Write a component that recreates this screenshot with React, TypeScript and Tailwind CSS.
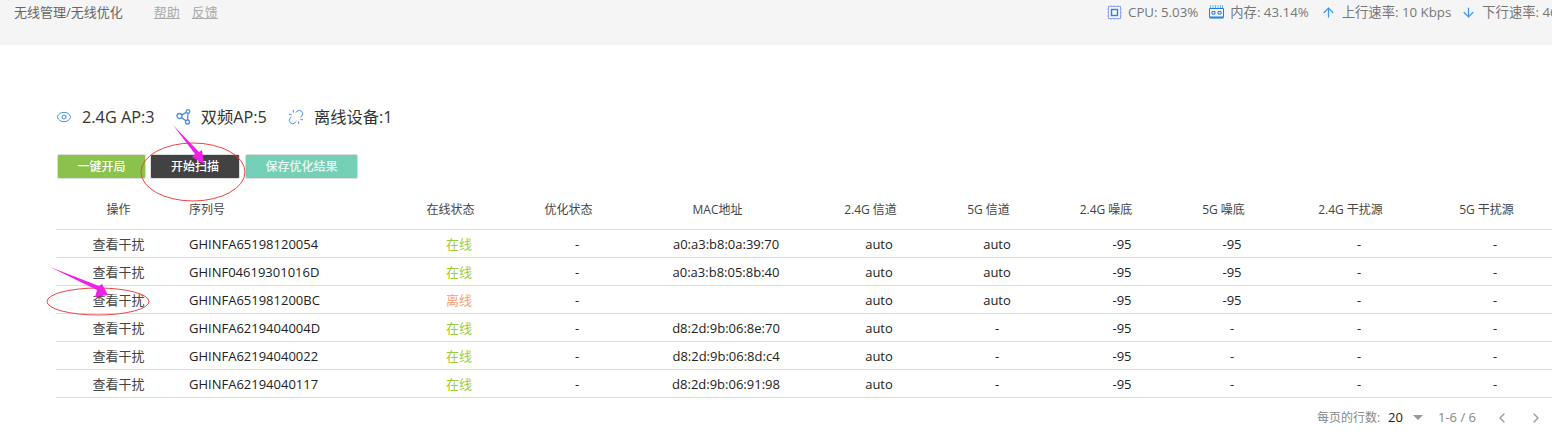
import React from 'react';
import { ArrowDown, ArrowUp, ChevronLeft, ChevronRight, Eye, Unlink } from 'lucide-react';

const font = 'font-["Open_Sans","Noto_Sans_CJK_SC",sans-serif]';
const cols = 'grid grid-cols-[125px_223px_110px_126px_172px_134px_102px_148px_72px_182px_90px_12px]';

const headers = [
  ['操作', 'text-center'],
  ['序列号', 'pl-[8px]'],
  ['在线状态', 'pr-[17px] text-center'],
  ['优化状态', 'pr-[17px] text-center'],
  ['MAC地址', 'pr-[17px] text-center'],
  ['2.4G 信道', 'pr-[17px] text-center'],
  ['5G 信道', 'pr-[17px] text-center'],
  ['2.4G 噪底', 'pr-[32px] text-center'],
  ['5G 噪底', 'pr-[17px] text-center'],
  ['2.4G 干扰源', 'pr-[17px] text-center'],
  ['5G 干扰源', 'pr-[17px] text-center'],
];

const rows = [
  ['GHINFA65198120054', '在线', 'a0:a3:b8:0a:39:70', 'auto', 'auto', '-95', '-95'],
  ['GHINF04619301016D', '在线', 'a0:a3:b8:05:8b:40', 'auto', 'auto', '-95', '-95'],
  ['GHINFA651981200BC', '离线', '', 'auto', 'auto', '-95', '-95'],
  ['GHINFA6219404004D', '在线', 'd8:2d:9b:06:8e:70', 'auto', '-', '-95', '-'],
  ['GHINFA62194040022', '在线', 'd8:2d:9b:06:8d:c4', 'auto', '-', '-95', '-'],
  ['GHINFA62194040117', '在线', 'd8:2d:9b:06:91:98', 'auto', '-', '-95', '-'],
];

const ChipIcon = () => (
  <svg className="h-[15px] w-[15px] shrink-0" viewBox="0 0 15 15" fill="none">
    <rect x="1.5" y="1.5" width="12" height="12" stroke="#8aa8ee" strokeWidth="1" />
    <rect x="4.5" y="4.5" width="6" height="6" stroke="#2f7fe6" strokeWidth="1.4" />
    <path d="M4 0v1.5M7.5 0v1.5M11 0v1.5M4 13.5V15M7.5 13.5V15M11 13.5V15M0 4h1.5M0 7.5h1.5M0 11h1.5M13.5 4H15M13.5 7.5H15M13.5 11H15" stroke="#b9a8f0" strokeWidth="1" />
  </svg>
);

const RamIcon = () => (
  <svg className="h-[14px] w-[15px] shrink-0" viewBox="0 0 15 14" fill="none">
    <path d="M1.5 0v3M4 0v3M6.5 0v3M9 0v3M11.5 0v3M13.5 0v3" stroke="#6fb0f0" strokeWidth="1" />
    <path d="M.5 3.5h14v8.500H.5z" stroke="#1f7fe0" strokeWidth="1" />
    <path d="M3 6.500h3v2.500H3zM9 6.500h3v2.500H9z" stroke="#1f7fe0" strokeWidth="1" />
    <path d="M.5 12.800h14" stroke="#1f7fe0" strokeWidth="1.500" />
  </svg>
);

const NodesIcon = () => (
  <svg className="h-[16px] w-[15px] shrink-0" viewBox="0 0 15 16" fill="none" stroke="#4a8fe0" strokeWidth="1.3">
    <circle cx="3.5" cy="7" r="2.5" />
    <circle cx="12" cy="2.5" r="1.8" />
    <circle cx="11.5" cy="13" r="2" />
    <path d="M5.8 5.800 10.400 3.400M5.500 8.600 9.900 11.800M12 4.300 11.600 11" />
  </svg>
);

const App = () => {
  return (
    <div className={`relative h-[435px] w-[1552px] overflow-hidden bg-white ${font}`}>
      {/* Top bar */}
      <div className="flex h-[45px] items-start justify-between bg-[#f5f5f5] pl-[14px] pt-[3px] text-[13px] leading-[18px] text-[#666]">
        <div className="flex">
          <span>无线管理/无线优化</span>
          <a className="ml-[31px] text-[#aaa] underline">帮助</a>
          <a className="ml-[12px] text-[#aaa] underline">反馈</a>
        </div>
        <div className="flex w-[445px] shrink-0 items-center overflow-hidden whitespace-nowrap text-[13.3px] text-[#777]">
          <ChipIcon />
          <span className="ml-[6px]">CPU: 5.03%</span>
          <span className="ml-[11px]"><RamIcon /></span>
          <span className="ml-[6px]">内存: 43.14%</span>
          <ArrowUp className="ml-[12px] h-[15px] w-[15px] shrink-0 text-[#3f97f0]" strokeWidth={2} />
          <span className="ml-[6px]">上行速率: 10 Kbps</span>
          <ArrowDown className="ml-[10px] h-[15px] w-[15px] shrink-0 text-[#3f97f0]" strokeWidth={2} />
          <span className="ml-[6px]">下行速率: 46 Kbps</span>
        </div>
      </div>

      <div className="pl-[56px]">
        {/* Counts */}
        <div className="mt-[61px] flex h-[22px] items-center text-[16.3px] text-[#333]">
          <Eye className="h-[16px] w-[16px] shrink-0 text-[#4a8fe0]" strokeWidth={1.5} />
          <span className="ml-[10px]">2.4G AP:3</span>
          <span className="ml-[21px]"><NodesIcon /></span>
          <span className="ml-[10px]">双频AP:5</span>
          <Unlink className="ml-[21px] h-[16px] w-[16px] shrink-0 text-[#4a8fe0]" strokeWidth={1.5} />
          <span className="ml-[10px]">离线设备:1</span>
        </div>

        {/* Actions */}
        <div className="mt-[26px] ml-[1px] flex text-[12px] font-medium text-white">
          <button className="h-[25px] w-[89px] rounded-[2px] border border-[#ddd] bg-[#8bc24c]">一键开局</button>
          <button className="ml-[4px] h-[25px] w-[90px] rounded-[2px] border border-[#ddd] bg-[#424242]">开始扫描</button>
          <button className="ml-[5px] h-[25px] w-[113px] rounded-[2px] border border-[#ddd] bg-[#73d0b7] text-[#e8f8f3]">保存优化结果</button>
        </div>

        {/* Table */}
        <div className={`${cols} mt-[18px] h-[33px] items-center border-b border-[#ddd] pb-[6px] text-[12px] text-[#444]`}>
          {headers.map(([h, c]) => (
            <div key={h} className={c}>
              {h}
            </div>
          ))}
        </div>
        {rows.map((r) => (
          <div key={r[0]} className={`${cols} h-[28px] items-center border-b border-[#ddd] pt-[2px] text-[13px] text-[#222]`}>
            <div className="text-center text-[#444]">查看干扰</div>
            <div className="pl-[8px]">{r[0]}</div>
            <div className={r[1] === '在线' ? 'text-center text-[#9ccc3c]' : 'text-center text-[#f2a078]'}>{r[1]}</div>
            <div className="text-center">-</div>
            <div className="text-center">{r[2]}</div>
            <div className="text-center">{r[3]}</div>
            <div className="text-center">{r[4]}</div>
            <div className="text-center">{r[5]}</div>
            <div className="text-center">{r[6]}</div>
            <div className="text-center">-</div>
            <div className="text-center">-</div>
            <div />
          </div>
        ))}

        {/* Pagination */}
        <div className="mt-[10px] flex items-center justify-end text-[12px] text-[#888]">
          <span>每页的行数:</span>
          <span className="ml-[8px] text-[13px] text-[#222]">20</span>
          <span className="ml-[10px] h-0 w-0 border-x-[5.5px] border-t-[5px] border-x-transparent border-t-[#999]" />
          <span className="ml-[15px] text-[13px]">1-6 / 6</span>
          <ChevronLeft className="ml-[18px] h-[16px] w-[16px] text-[#999]" />
          <ChevronRight className="ml-[18px] mr-[8px] h-[16px] w-[16px] text-[#999]" />
        </div>
      </div>

      {/* Hand-drawn annotations */}
      <svg className="absolute inset-0 pointer-events-none" width="1552" height="435">
        <ellipse cx="193" cy="172" rx="52" ry="29" fill="none" stroke="#ee4444" strokeWidth="1" />
        <ellipse cx="98" cy="301.5" rx="51" ry="13.5" fill="none" stroke="#ee4444" strokeWidth="1" />
        <polygon points="173,125 195,154 192,157 204,164 202,150 199,152" fill="#f020e8" />
        <polygon points="50,267 97,290 95,297 108,295 102,284 99,286" fill="#f020e8" />
      </svg>
    </div>
  );
};

export default App;
